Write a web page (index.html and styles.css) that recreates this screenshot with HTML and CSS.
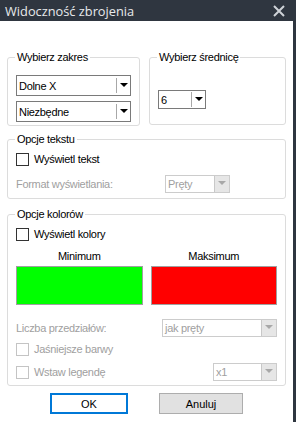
FILE: index.html
```html
<!DOCTYPE html>
<html lang="pl">
<head>
  <meta charset="UTF-8" />
  <title>Widoczność zbrojenia</title>
  <link rel="stylesheet" href="styles.css">
</head>
<body>
  <div class="window">
    <div class="titlebar">
      <span class="title">Widoczność zbrojenia</span>
      <svg class="close" width="12" height="12" viewBox="0 0 12 12">
        <path d="M1 1 L11 11 M11 1 L1 11" stroke="#cfd3d8" stroke-width="2"/>
      </svg>
    </div>

    <div class="client">
      <div class="content">
        <div class="row">
          <fieldset class="group g-range">
            <legend>Wybierz zakres</legend>
            <div class="combo"><span class="value">Dolne X</span><span class="arrow"></span></div>
            <div class="combo"><span class="value">Niezbędne</span><span class="arrow"></span></div>
          </fieldset>
          <fieldset class="group g-diam">
            <legend>Wybierz średnicę</legend>
            <div class="combo small"><span class="value">6</span><span class="arrow"></span></div>
          </fieldset>
        </div>

        <fieldset class="group g-text">
          <legend>Opcje tekstu</legend>
          <label class="check"><span class="box"></span>Wyświetl tekst</label>
          <div class="line">
            <span class="muted">Format wyświetlania:</span>
            <div class="combo disabled w-pret"><span class="value">Pręty</span><span class="arrow"></span></div>
          </div>
        </fieldset>

        <fieldset class="group g-color">
          <legend>Opcje kolorów</legend>
          <label class="check"><span class="box"></span>Wyświetl kolory</label>
          <div class="swatches">
            <div class="swatch">
              <span class="swatch-label">Minimum</span>
              <div class="color green"></div>
            </div>
            <div class="swatch">
              <span class="swatch-label">Maksimum</span>
              <div class="color red"></div>
            </div>
          </div>
          <div class="line intervals">
            <span class="muted">Liczba przedziałów:</span>
            <div class="combo disabled w-jak"><span class="value">jak pręty</span><span class="arrow"></span></div>
          </div>
          <label class="check disabled lighter"><span class="box"></span>Jaśniejsze barwy</label>
          <div class="line legend-row">
            <label class="check disabled"><span class="box"></span>Wstaw legendę</label>
            <div class="combo disabled w-x1"><span class="value">x1</span><span class="arrow"></span></div>
          </div>
        </fieldset>

        <div class="buttons">
          <button class="btn default">OK</button>
          <button class="btn">Anuluj</button>
        </div>
      </div>
      <div class="frame-edge"></div>
    </div>
  </div>
</body>
</html>
```

FILE: styles.css
```css
* {
  box-sizing: border-box;
}

body {
  margin: 0;
  font-family: 'Liberation Sans', Arial, sans-serif;
  font-size: 11px;
  letter-spacing: -0.3px;
  color: #000;
  background: #fff;
}

.window {
  width: 296px;
  height: 422px;
  display: flex;
  flex-direction: column;
}

.titlebar {
  height: 21px;
  background: #2f3640;
  display: flex;
  align-items: center;
  justify-content: space-between;
  padding: 0 11px 0 5px;
}

.title {
  font-family: 'Open Sans', sans-serif;
  font-size: 12.8px;
  letter-spacing: 0;
  color: #e8eaec;
}

.client {
  flex: 1;
  display: flex;
}

.content {
  flex: 1;
  background: #fff;
  padding: 29px 7px 0 7px;
}

.frame-edge {
  width: 3px;
  background: #2f3640;
}

.row {
  display: flex;
  gap: 9px;
}

.group {
  margin: 0;
  border: 1px solid #dcdcdc;
  border-radius: 3px;
  padding: 0 8px;
  min-width: 0;
}

.group legend {
  padding: 0 2px;
  margin-left: -1px;
  line-height: 14px;
}

.g-range {
  width: 133px;
  height: 76px;
  padding-top: 11px;
}

.g-diam {
  width: 137px;
  height: 75px;
  padding-top: 26px;
}

.g-text {
  margin-top: 6px;
  height: 67px;
  padding-top: 4px;
}

.g-color {
  margin-top: 8px;
  height: 179px;
  padding-top: 4px;
}

.combo {
  height: 21px;
  border: 1px solid #7a7a7a;
  background: #fff;
  display: flex;
  align-items: center;
  margin-bottom: 5px;
}

.combo .value {
  flex: 1;
  padding-left: 2px;
}

.combo .arrow {
  width: 14px;
  height: 15px;
  border-left: 1px solid #a8a8a8;
  position: relative;
}

.combo .arrow::after {
  content: "";
  position: absolute;
  left: 3px;
  top: 5px;
  border-left: 4px solid transparent;
  border-right: 4px solid transparent;
  border-top: 4px solid #000;
}

.combo.small {
  width: 48px;
  height: 19px;
  margin-top: 0;
}

.combo.disabled {
  border-color: #cccccc;
  color: #a0a0a0;
  height: 18px;
  margin-bottom: 0;
}

.combo.disabled .arrow {
  height: 16px;
  width: 15px;
  background: #e6e6e6;
  border-left-color: #c8c8c8;
}

.combo.disabled .arrow::after {
  border-top-color: #a8a8a8;
}

.w-pret {
  width: 65px;
}

.w-jak {
  width: 115px;
}

.w-x1 {
  width: 64px;
  height: 19px;
}

.check {
  display: flex;
  align-items: center;
  gap: 5px;
  height: 18px;
}

.check .box {
  width: 13px;
  height: 13px;
  border: 1px solid #333;
  background: #fff;
}

.check.disabled {
  color: #a0a0a0;
}

.check.disabled .box {
  border-color: #c4c4c4;
}

.muted {
  color: #a0a0a0;
}

.line {
  display: flex;
  justify-content: space-between;
  align-items: center;
}

.g-text .line {
  margin-top: 7px;
  padding-right: 47px;
}

.swatches {
  display: flex;
  gap: 8px;
  margin-top: 7px;
}

.swatch {
  flex: 1;
  display: flex;
  flex-direction: column;
  align-items: center;
}

.swatch-label {
  margin-bottom: 4px;
}

.color {
  width: 100%;
  height: 39px;
  border: 1px solid #a0a0a0;
}

.green {
  background: #00ff00;
}

.red {
  background: #ff0000;
}

.intervals {
  margin-top: 14px;
}

.lighter {
  margin-top: 3px;
}

.legend-row {
  margin-top: 5px;
}

.buttons {
  display: flex;
  justify-content: center;
  gap: 31px;
  margin-top: 7px;
}

.btn {
  font-family: 'Liberation Sans', Arial, sans-serif;
  font-size: 11px;
  width: 78px;
  height: 21px;
  border: 1px solid #adadad;
  background: #e1e1e1;
  padding: 0;
}

.btn.default {
  background: #fff;
  border: 2px solid #0078d7;
}

.btn + .btn {
  width: 84px;
}
```
